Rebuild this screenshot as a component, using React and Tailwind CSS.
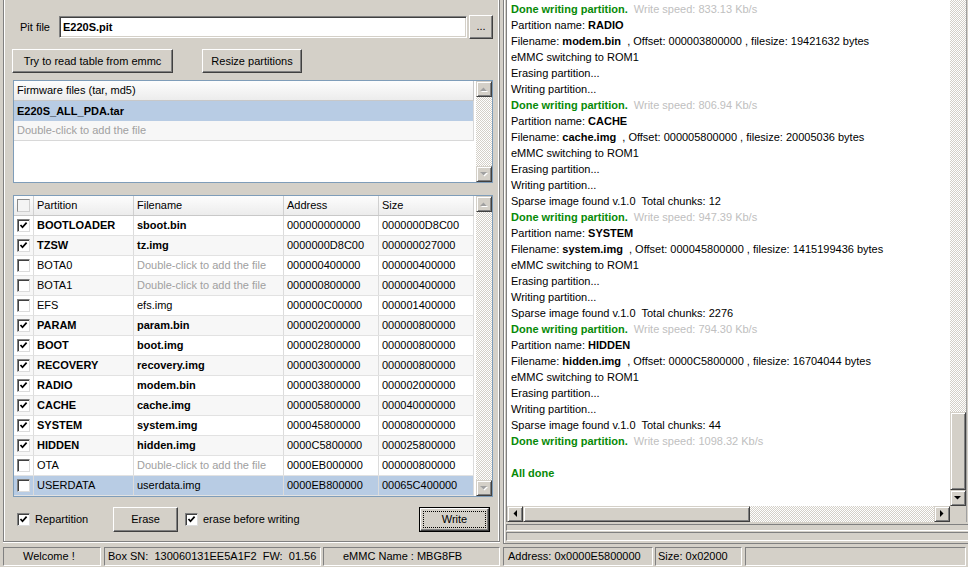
import React from 'react'

const RAISED = 'border border-t-white border-l-white border-r-[#404040] border-b-[#404040] shadow-[inset_-1px_-1px_0_#808080]'
const SB_BTN = 'border border-t-[#d4d0c8] border-l-[#d4d0c8] border-r-[#404040] border-b-[#404040] shadow-[inset_1px_1px_0_#fff,inset_-1px_-1px_0_#808080] bg-[#d4d0c8]'
const CHECKER = 'bg-[repeating-conic-gradient(#d4d0c8_0_25%,#ffffff_0_50%)] bg-[length:2px_2px]'
const STATUS = 'h-[19px] flex items-center border border-t-[#808080] border-l-[#808080] border-r-white border-b-white whitespace-pre'

const ROWS = [
  { name: 'BOOTLOADER', file: 'sboot.bin', addr: '000000000000', size: '0000000D8C00', on: true },
  { name: 'TZSW', file: 'tz.img', addr: '0000000D8C00', size: '000000027000', on: true },
  { name: 'BOTA0', file: null, addr: '000000400000', size: '000000400000' },
  { name: 'BOTA1', file: null, addr: '000000800000', size: '000000400000' },
  { name: 'EFS', file: 'efs.img', addr: '000000C00000', size: '000001400000' },
  { name: 'PARAM', file: 'param.bin', addr: '000002000000', size: '000000800000', on: true },
  { name: 'BOOT', file: 'boot.img', addr: '000002800000', size: '000000800000', on: true },
  { name: 'RECOVERY', file: 'recovery.img', addr: '000003000000', size: '000000800000', on: true },
  { name: 'RADIO', file: 'modem.bin', addr: '000003800000', size: '000002000000', on: true },
  { name: 'CACHE', file: 'cache.img', addr: '000005800000', size: '000040000000', on: true },
  { name: 'SYSTEM', file: 'system.img', addr: '000045800000', size: '000080000000', on: true },
  { name: 'HIDDEN', file: 'hidden.img', addr: '0000C5800000', size: '000025800000', on: true },
  { name: 'OTA', file: null, addr: '0000EB000000', size: '000000800000' },
  { name: 'USERDATA', file: 'userdata.img', addr: '0000EB800000', size: '00065C400000', sel: true },
]

const done = (speed) => [['g', 'Done writing partition.'], ['s', '  Write speed: ' + speed + ' Kb/s']]
const pname = (n) => [['n', 'Partition name: '], ['b', n]]
const fname = (f, off, sz) => [['n', 'Filename: '], ['b', f], ['n', '  , Offset: ' + off + ' , filesize: ' + sz + ' bytes']]
const plain = (t) => [['n', t]]
const block = () => [plain('eMMC switching to ROM1'), plain('Erasing partition...'), plain('Writing partition...')]

const LOG = [
  done('833.13'),
  pname('RADIO'),
  fname('modem.bin', '000003800000', '19421632'),
  ...block(),
  done('806.94'),
  pname('CACHE'),
  fname('cache.img', '000005800000', '20005036'),
  ...block(),
  plain('Sparse image found v.1.0  Total chunks: 12'),
  done('947.39'),
  pname('SYSTEM'),
  fname('system.img', '000045800000', '1415199436'),
  ...block(),
  plain('Sparse image found v.1.0  Total chunks: 2276'),
  done('794.30'),
  pname('HIDDEN'),
  fname('hidden.img', '0000C5800000', '16704044'),
  ...block(),
  plain('Sparse image found v.1.0  Total chunks: 44'),
  done('1098.32'),
  [],
  [['g', 'All done']],
]

const SEG = { n: '', b: 'font-bold', g: 'font-bold text-[#078a07]', s: 'text-[#c0c0c0]' }

function Check({ on, dim }) {
  return (
    <span
      className={
        'relative inline-block w-[13px] h-[13px] border ' +
        (dim
          ? 'bg-[#f4f4f4] border-t-[#8a8a8a] border-l-[#8a8a8a] border-r-[#cfcfcf] border-b-[#cfcfcf]'
          : 'bg-white border-t-[#808080] border-l-[#808080] border-r-[#dcdcdc] border-b-[#dcdcdc] shadow-[inset_1px_1px_0_#404040]')
      }
    >
      {on && (
        <svg className="absolute left-0 top-0" width="11" height="11" viewBox="0 0 11 11">
          <path d="M2.5 5 L4.5 7.3 L8.6 2.6" stroke="#000" strokeWidth="1.7" fill="none" />
        </svg>
      )}
    </span>
  )
}

function Arrow({ dir, dim }) {
  const pts = {
    up: '0,4 3.5,0.5 7,4',
    down: '0,0 3.5,3.5 7,0',
    left: '4,0 0.5,3.5 4,7',
    right: '0,0 3.5,3.5 0,7',
  }[dir]
  const horiz = dir === 'left' || dir === 'right'
  return (
    <div className={'w-[16px] h-[16px] shrink-0 flex items-center justify-center ' + SB_BTN}>
      <svg width={horiz ? 5 : 8} height={horiz ? 8 : 5} viewBox={horiz ? '0 0 5 8' : '0 0 8 5'} className="overflow-visible">
        {dim && <polygon points={pts} fill="#fff" transform="translate(1,1)" />}
        <polygon points={pts} fill={dim ? '#a0a0a0' : '#000'} />
      </svg>
    </div>
  )
}

function VScroll() {
  return (
    <div className="w-[16px] flex flex-col shrink-0">
      <Arrow dir="up" dim />
      <div className={'flex-1 ' + CHECKER} />
      <Arrow dir="down" dim />
    </div>
  )
}

function FirmwareList() {
  return (
    <div className="ml-[9px] mt-[7px] w-[480px] h-[103px] border border-[#7f9db9] bg-white flex">
      <div className="w-[462px] flex flex-col">
        <div className="w-[460px] h-[20px] flex items-center pl-[3px] bg-linear-to-b from-[#fdfdfd] to-[#ececec] border-b border-r border-[#c8c8c8]">
          Firmware files (tar, md5)
        </div>
        <div className="w-[460px] h-[20px] flex items-center pl-[3px] bg-[#b8cce4] font-bold border-r border-[#d8d8d8]">
          E220S_ALL_PDA.tar
        </div>
        <div className="w-[460px] h-[20px] flex items-center pl-[3px] bg-[#f7f7f7] text-[#a0a0a0] border-b border-r border-[#d8d8d8]">
          Double-click to add the file
        </div>
      </div>
      <VScroll />
    </div>
  )
}

function PartitionTable() {
  const W = ['w-[20px]', 'w-[100px]', 'w-[150px]', 'w-[95px]', 'w-[95px]']
  return (
    <div className="ml-[9px] mt-[12px] w-[480px] h-[302px] border border-[#7f9db9] bg-white flex">
      <div className="w-[462px] flex flex-col">
        <div className="h-[20px] flex bg-linear-to-b from-[#fdfdfd] to-[#ececec] border-b border-[#c8c8c8] w-[460px]">
          <div className={W[0] + ' flex items-center pl-[3px] border-r border-[#d0d0d0]'}>
            <Check dim />
          </div>
          <div className={W[1] + ' flex items-center pl-[3px] border-r border-[#d0d0d0]'}>Partition</div>
          <div className={W[2] + ' flex items-center pl-[3px] border-r border-[#d0d0d0]'}>Filename</div>
          <div className={W[3] + ' flex items-center pl-[3px] border-r border-[#d0d0d0]'}>Address</div>
          <div className={W[4] + ' flex items-center pl-[3px] border-r border-[#d0d0d0]'}>Size</div>
        </div>
        {ROWS.map((r, i) => {
          const bg = r.sel ? 'bg-[#b8cce4]' : i % 2 ? 'bg-[#f7f7f7]' : 'bg-white'
          const bold = r.on ? 'font-bold' : ''
          return (
            <div key={r.name} className={'h-[20px] flex w-[460px] border-b border-[#e2e2e2] ' + bg}>
              <div className={W[0] + ' flex items-center pl-[3px] border-r border-[#dcdcdc]'}>
                <Check on={r.on} />
              </div>
              <div className={W[1] + ' flex items-center pl-[3px] border-r border-[#dcdcdc] ' + bold}>{r.name}</div>
              <div
                className={
                  W[2] + ' flex items-center pl-[3px] border-r border-[#dcdcdc] ' + (r.file ? bold : 'text-[#a0a0a0]')
                }
              >
                {r.file || 'Double-click to add the file'}
              </div>
              <div className={W[3] + ' flex items-center pl-[3px] border-r border-[#dcdcdc]'}>{r.addr}</div>
              <div className={W[4] + ' flex items-center pl-[3px] border-r border-[#dcdcdc]'}>{r.size}</div>
            </div>
          )
        })}
      </div>
      <VScroll />
    </div>
  )
}

function LeftPanel() {
  return (
    <div className="w-[500px] shrink-0">
      <div className="ml-[3px] w-[497px] h-[542px] border-l border-r border-b border-[#808080] shadow-[inset_1px_0_0_#fff,inset_-1px_0_0_#fff,0_1px_0_#fff] flex flex-col">
        {/* pit file */}
        <div className="mt-[15px] h-[24px] flex items-center pl-[16px]">
          <span className="w-[39px]">Pit file</span>
          <div className="w-[408px] h-[22px] bg-white flex items-center pl-[3px] font-bold border border-t-[#808080] border-l-[#808080] border-r-white border-b-white shadow-[inset_1px_1px_0_#404040,inset_-1px_-1px_0_#d4d0c8]">
            E220S.pit
          </div>
          <div className={'ml-[2px] w-[24px] h-[24px] flex items-center justify-center pb-[2px] ' + RAISED}>...</div>
        </div>

        {/* buttons */}
        <div className="mt-[10px] h-[24px] flex pl-[8px]">
          <div className={'w-[161px] flex items-center justify-center ' + RAISED}>Try to read table from emmc</div>
          <div className={'ml-[29px] w-[100px] flex items-center justify-center ' + RAISED}>Resize partitions</div>
        </div>

        <FirmwareList />
        <PartitionTable />

        {/* bottom controls */}
        <div className="mt-[10px] h-[25px] flex items-center pl-[13px]">
          <Check on />
          <span className="ml-[5px] w-[78px]">Repartition</span>
          <div className={'w-[65px] h-[25px] flex items-center justify-center pb-[1px] ' + RAISED}>Erase</div>
          <span className="ml-[7px] flex">
            <Check on />
          </span>
          <span className="ml-[5px]">erase before writing</span>
          <div className="ml-auto mr-[9px] w-[71px] h-[25px] border border-black">
            <div className={'w-full h-full p-[2px] ' + RAISED}>
              <div className="w-full h-full border border-dotted border-black flex items-center justify-center">Write</div>
            </div>
          </div>
        </div>
      </div>
    </div>
  )
}

function RightPanel() {
  return (
    <div className="flex-1">
      <div className="ml-[3px] h-[544px] border-l border-b border-[#808080] shadow-[inset_1px_0_0_#fff] pl-[2px] flex flex-col">
        <div className="w-[461px] h-[522px] border-l border-r border-l-[#808080] border-r-[#a0a0a0] shadow-[inset_1px_0_0_#404040] flex flex-col">
          <div className="h-[506px] flex">
            <div className="flex-1 bg-white pl-[4px] pt-[1px] overflow-hidden">
              {LOG.map((line, i) => (
                <div key={i} className="h-[16px] leading-[16px] whitespace-pre">
                  {line.map(([k, t], j) => (
                    <span key={j} className={SEG[k]}>
                      {t}
                    </span>
                  ))}
                </div>
              ))}
            </div>
            <div className="w-[16px] flex flex-col">
              <div className={'flex-1 ' + CHECKER} />
              <div className={'h-[78px] ' + SB_BTN} />
              <Arrow dir="down" />
            </div>
          </div>
          <div className="h-[16px] flex">
            <Arrow dir="left" />
            <div className={'w-[227px] ' + SB_BTN} />
            <div className={'flex-1 ' + CHECKER} />
            <Arrow dir="right" />
            <div className="w-[16px] bg-[#d4d0c8]" />
          </div>
        </div>
        <div className="mt-[2px] h-[7px] border-t border-l border-b border-t-[#808080] border-l-[#808080] border-b-white" />
        <div className="mt-[1px] h-[9px] border-t border-l border-b border-t-[#808080] border-l-[#808080] border-b-white" />
      </div>
    </div>
  )
}

export default function App() {
  return (
    <div className="w-[968px] h-[567px] overflow-hidden bg-[#d4d0c8] text-black text-[11px] font-['Liberation_Sans',Arial,sans-serif] flex flex-col">
      <div className="h-[544px] flex">
        <LeftPanel />
        <RightPanel />
      </div>
      <div className="h-[23px] pt-[3px] flex">
        <div className={'ml-[3px] w-[98px] pl-[19px] ' + STATUS}>Welcome !</div>
        <div className={'ml-[3px] w-[217px] pl-[3px] ' + STATUS}>Box SN:  130060131EE5A1F2  FW:  01.56</div>
        <div className={'ml-[2px] w-[177px] pl-[19px] ' + STATUS}>eMMC Name : MBG8FB</div>
        <div className={'ml-[3px] w-[150px] pl-[4px] ' + STATUS}>Address: 0x0000E5800000</div>
        <div className={'ml-[2px] w-[87px] pl-[2px] ' + STATUS}>Size: 0x02000</div>
        <div className={'ml-[3px] w-[221px] ' + STATUS} />
      </div>
    </div>
  )
}
